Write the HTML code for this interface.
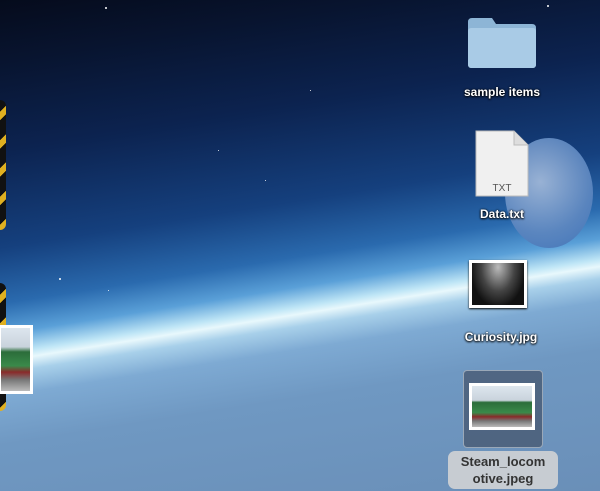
<!DOCTYPE html>
<html><head><style>
html,body{margin:0;padding:0;width:600px;height:491px;overflow:hidden}
body{position:relative;font-family:"Liberation Sans",sans-serif}
#wrap{position:absolute;left:0;top:0;width:600px;height:491px;overflow:hidden;
background:linear-gradient(171deg,#050b1c 0px,#08142f 60px,#0c2350 150px,#15407e 245px,#2a6aae 300px,#5aa0d8 330px,#bfe6f6 350px,#e8f8fc 357px,#a8d0ea 369px,#7eaad3 392px,#6f98c2 440px,#6a8fb8 579px)}
.star{position:absolute;width:2px;height:2px;background:#fff;border-radius:1px}
.moon{position:absolute;left:505px;top:138px;width:88px;height:110px;border-radius:50%;background:radial-gradient(circle at 40% 40%,#9fb7d8,#5c86bf 60%,#3f71b6);opacity:.95}
.lbl{position:absolute;color:#fff;font-weight:bold;font-size:12px;text-shadow:0 1px 2px #000,0 0 2px #000;text-align:center;width:120px}
.bar{position:absolute;left:-8px;width:14px;background:#111;border-radius:6px}
</style></head><body><div id="wrap">
<div class="star" style="left:105px;top:7px"></div>
<div class="star" style="left:218px;top:150px;width:1px;height:1px"></div>
<div class="star" style="left:59px;top:278px"></div>
<div class="star" style="left:108px;top:290px;width:1px;height:1px"></div>
<div class="star" style="left:547px;top:5px"></div>
<div class="star" style="left:265px;top:180px;width:1px;height:1px"></div>
<div class="star" style="left:310px;top:90px;width:1px;height:1px"></div>
<div class="moon"></div>
<svg style="position:absolute;left:466px;top:14px" width="72" height="56"><path d="M2 8 q0-4 4-4 h20 l4 6 h36 q4 0 4 4 v36 q0 4-4 4 h-60 q-4 0-4-4z" fill="#8db5d6"/><rect x="2" y="14" width="68" height="40" rx="3" fill="#a9cbe6"/></svg>
<div class="lbl" style="left:442px;top:85px">sample items</div>
<svg style="position:absolute;left:474px;top:130px" width="56" height="68"><path d="M2 1 h38 l14 14 v51 h-52z" fill="#f0f0f0" stroke="#bbb"/><path d="M40 1 v14 h14" fill="#ddd" stroke="#bbb"/><text x="28" y="61" font-size="10" fill="#555" text-anchor="middle" font-family="Liberation Sans">TXT</text></svg>
<div class="lbl" style="left:442px;top:207px">Data.txt</div>
<div style="position:absolute;left:469px;top:260px;width:58px;height:48px;background:#fff;box-shadow:0 1px 2px #000"><div style="margin:3px;height:42px;background:radial-gradient(ellipse at 50% 10%,#bbb,#444 45%,#111 75%)"></div></div>
<div class="lbl" style="left:441px;top:330px">Curiosity.jpg</div>
<div style="position:absolute;left:463px;top:370px;width:78px;height:76px;background:rgba(70,85,110,.75);border:1px solid #9aa8b8;border-radius:4px"></div>
<div style="position:absolute;left:469px;top:383px;width:66px;height:47px;background:#fff"><div style="margin:3px;height:41px;background:linear-gradient(to bottom,#dde6ee 0,#c9d3dc 35%,#2b6d3a 40%,#3a8a4a 65%,#8a2a2a 75%,#777 85%,#bbb 100%)"></div></div>
<div style="position:absolute;left:448px;top:451px;width:110px;height:36px;background:#c7ccd2;border-radius:7px;color:#333;font-size:13px;font-weight:bold;text-align:center;line-height:17px;padding-top:2px">Steam_locom<br>otive.jpeg</div>
<div class="bar" style="top:100px;height:130px;background:repeating-linear-gradient(135deg,#111 0 14px,#e0b020 14px 20px)"></div>
<div class="bar" style="top:283px;height:128px;background:repeating-linear-gradient(135deg,#111 0 14px,#e0b020 14px 20px)"></div>
<div style="position:absolute;left:-2px;top:325px;width:35px;height:69px;background:#fff"><div style="margin:3px;height:63px;background:linear-gradient(to bottom,#dde6ee 0,#c9d3dc 30%,#2b6d3a 38%,#3a8a4a 60%,#8a2a2a 70%,#777 82%,#bbb 100%)"></div></div>
</div></body></html>
